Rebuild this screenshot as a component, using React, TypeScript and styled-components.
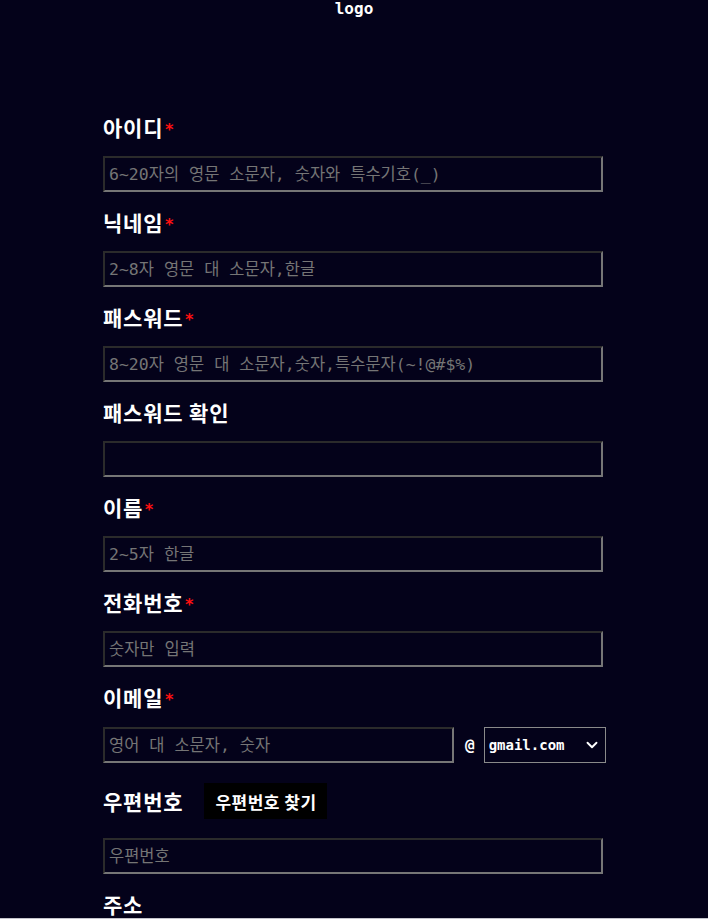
import React from 'react';
import styled, { createGlobalStyle } from 'styled-components';
import { ChevronDown } from 'lucide-react';

const GlobalStyle = createGlobalStyle`
    html, body {
        margin: 0;
        padding: 0;
        background: #c4c4cc;
    }
    * {
        box-sizing: border-box;
    }
`;

interface FieldProps {
    label: string;
    required?: boolean;
    placeholder?: string;
    type?: string;
}

const Field = ({ label, required, placeholder, type = 'text' }: FieldProps) => (
    <FieldBlock>
        <Label>
            {label}
            {required && <Star>*</Star>}
        </Label>
        <Input type={type} placeholder={placeholder} />
    </FieldBlock>
);

const App = () => {
    return (
        <Page>
            <GlobalStyle />
            <Logo>logo</Logo>
            <Form onSubmit={(e) => e.preventDefault()}>
                <Field label="아이디" required placeholder="6~20자의 영문 소문자, 숫자와 특수기호(_)" />
                <Field label="닉네임" required placeholder="2~8자 영문 대 소문자,한글" />
                <Field label="패스워드" required type="password" placeholder="8~20자 영문 대 소문자,숫자,특수문자(~!@#$%)" />
                <Field label="패스워드 확인" type="password" />
                <Field label="이름" required placeholder="2~5자 한글" />
                <Field label="전화번호" required placeholder="숫자만 입력" />
                <FieldBlock>
                    <Label>
                        이메일
                        <Star>*</Star>
                    </Label>
                    <EmailRow>
                        <EmailInput type="text" placeholder="영어 대 소문자, 숫자" />
                        <At>@</At>
                        <SelectWrap>
                            <Select defaultValue="gmail.com">
                                <option>gmail.com</option>
                                <option>naver.com</option>
                                <option>daum.net</option>
                            </Select>
                            <Chevron size={18} strokeWidth={2.5} />
                        </SelectWrap>
                    </EmailRow>
                </FieldBlock>
                <FieldBlock>
                    <ZipRow>
                        <Label>우편번호</Label>
                        <FindButton type="button">우편번호 찾기</FindButton>
                    </ZipRow>
                    <Input type="text" placeholder="우편번호" />
                </FieldBlock>
                <FieldBlock>
                    <Label>주소</Label>
                    <Input type="text" placeholder="주소" />
                </FieldBlock>
            </Form>
        </Page>
    );
};

export default App;

const Page = styled.div`
    height: 918px;
    overflow: hidden;
    background: #04021a;
    color: #fff;
    font-family: 'DejaVu Sans Mono', 'Noto Sans CJK KR', monospace;
`;

const Logo = styled.h1`
    margin: 0;
    text-align: center;
    font-size: 16px;
    line-height: 17px;
    font-weight: 700;
`;

const Form = styled.form`
    width: 503px;
    margin: 98px 0 0 103px;
    display: flex;
    flex-direction: column;
`;

const FieldBlock = styled.div`
    display: flex;
    flex-direction: column;
    gap: 17px;
    margin-bottom: 18px;
`;

const Label = styled.label`
    height: 24px;
    font-family: 'Noto Sans CJK KR', sans-serif;
    font-size: 21px;
    line-height: 24px;
    letter-spacing: 0.8px;
    font-weight: 700;
    color: #fff;
    display: flex;
    align-items: center;
    white-space: nowrap;
`;

const Star = styled.span`
    color: #ff1010;
    font-family: 'DejaVu Sans Mono', monospace;
    font-size: 16px;
    font-weight: 700;
    line-height: 1;
    margin-left: 1px;
    transform: translateY(3px);
`;

const Input = styled.input`
    width: 500px;
    height: 36px;
    padding: 0 4px;
    background: transparent;
    border: 2px solid;
    border-color: #2b2b2b #767676 #767676 #2b2b2b;
    color: #fff;
    font-family: 'DejaVu Sans Mono', 'Noto Sans CJK KR', monospace;
    font-size: 16.5px;
    outline: none;

    &::placeholder {
        color: #757575;
    }
`;

const EmailRow = styled.div`
    display: flex;
    align-items: center;
    margin-top: 1px;
`;

const EmailInput = styled(Input)`
    width: 351px;
`;

const At = styled.span`
    font-size: 16px;
    font-weight: 700;
    margin: 0 9px 0 11px;
`;

const SelectWrap = styled.div`
    position: relative;
    width: 122px;
    height: 36px;
`;

const Select = styled.select`
    appearance: none;
    width: 100%;
    height: 100%;
    padding: 0 4px;
    background: transparent;
    border: 1px solid #8a8a8a;
    color: #fff;
    font-family: 'DejaVu Sans Mono', monospace;
    font-weight: 700;
    font-size: 14px;
    outline: none;

    option {
        background: #04021a;
        color: #fff;
    }
`;

const Chevron = styled(ChevronDown)`
    position: absolute;
    right: 5px;
    top: 9px;
    color: #fff;
    pointer-events: none;
`;

const ZipRow = styled.div`
    display: flex;
    align-items: center;
    gap: 21px;
    height: 36px;
    margin-top: 2px;
    margin-bottom: 2px;
`;

const FindButton = styled.button`
    width: 123px;
    height: 36px;
    padding: 0;
    background: #000;
    border: 2px solid #000;
    color: #fff;
    font-family: 'Noto Sans CJK KR', sans-serif;
    font-weight: 700;
    font-size: 17px;
    letter-spacing: 0.5px;
    cursor: pointer;
`;
